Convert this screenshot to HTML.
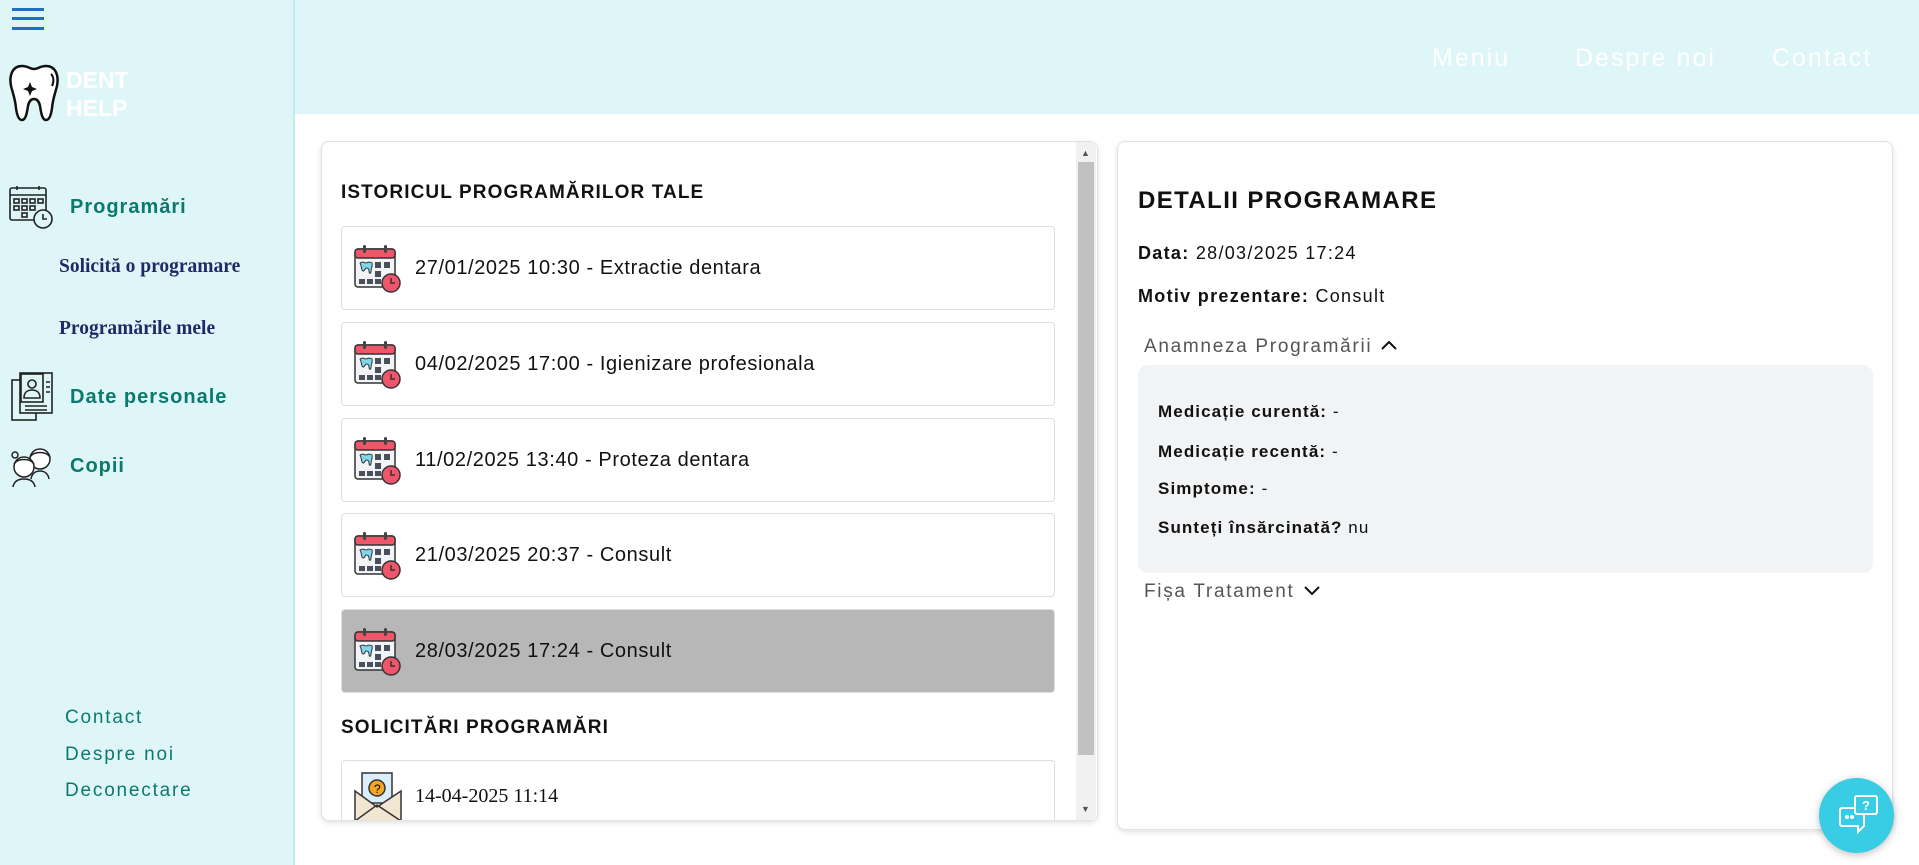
<!DOCTYPE html>
<html><head><meta charset="utf-8"><style>
*{box-sizing:border-box;margin:0;padding:0}
body{width:1919px;height:865px;overflow:hidden;background:#fff;font-family:"Liberation Sans",sans-serif;position:relative;color:#111}
.abs{position:absolute}
#side{left:0;top:0;width:295px;height:865px;background:#dff6f9;border-right:2px solid #bfecf2}
#top{left:295px;top:0;width:1624px;height:114px;background:#dff6f9}
.nav{color:#fff;font-size:25px;top:44px;letter-spacing:2px}
.teal{color:#0b7a6c}
.sb{font-weight:bold;font-size:20px;letter-spacing:1px}
.sub{font-family:"Liberation Serif",serif;font-weight:bold;color:#1c2a66;font-size:19.5px}
.lnk{font-size:19px;color:#0b7a6c;left:65px;letter-spacing:1.8px}
.card{background:#fff;border:1px solid #e2e2e2;border-radius:8px;box-shadow:0 2px 6px rgba(0,0,0,.12)}
.item{left:341px;width:714px;height:84px;border:1px solid #dedede;border-radius:4px;background:#fff}
.item span{position:absolute;left:73px;top:30px;font-size:20px;letter-spacing:0.6px}
.item svg{position:absolute;left:12px;top:18px}
h2{font-size:19px;font-weight:bold;position:absolute;letter-spacing:1.1px}
.row{font-size:18px;position:absolute;left:1138px;letter-spacing:1.3px}
.row b{font-weight:bold}
.g{font-size:17px;position:absolute;left:1158px;letter-spacing:1.1px}
</style></head><body>
<div id="side" class="abs"></div>
<div id="top" class="abs"></div>
<div class="abs" style="left:12px;top:8px;width:32px;height:3px;background:#1f6fc8"></div>
<div class="abs" style="left:12px;top:17px;width:32px;height:3px;background:#1f6fc8"></div>
<div class="abs" style="left:12px;top:27px;width:32px;height:3px;background:#1f6fc8"></div>
<svg class="abs" style="left:8px;top:64px" width="52" height="58" viewBox="0 0 52 58"><path d="M14 2C4 2 1 12 3 22c2 8 4 12 5 22 1 8 3 12 6 12 4 0 5-8 6-14 1-5 3-7 6-7s5 2 6 7c1 6 2 14 6 14 3 0 5-4 6-12 1-10 3-14 5-22 2-10-1-20-11-20-6 0-8 3-12 3S20 2 14 2z" fill="#fff" stroke="#111" stroke-width="2.5"/><path d="M22 18l2 5 5 2-5 2-2 5-2-5-5-2 5-2z" fill="#111"/><path d="M43 10c3 3 3 8 1 12" stroke="#111" stroke-width="2" fill="none"/></svg>
<div class="abs" style="left:66px;top:66px;color:#fff;font-weight:bold;font-size:23px;line-height:28px">DENT<br>HELP</div>
<svg class="abs" style="left:9px;top:185px" width="44" height="44" viewBox="0 0 44 44" fill="none" stroke="#222" stroke-width="1.6"><rect x="1" y="3" width="36" height="32" rx="2"/><line x1="1" y1="10" x2="37" y2="10"/><line x1="8" y1="1" x2="8" y2="5"/><line x1="30" y1="1" x2="30" y2="5"/><rect x="5" y="14" width="5" height="4"/><rect x="13" y="14" width="5" height="4"/><rect x="21" y="14" width="5" height="4"/><rect x="29" y="14" width="5" height="4"/><rect x="5" y="21" width="5" height="4"/><rect x="13" y="21" width="5" height="4"/><rect x="21" y="21" width="5" height="4"/><rect x="13" y="28" width="5" height="4"/><circle cx="34" cy="34" r="9" fill="#dff6f9"/><path d="M34 29v5h4"/></svg>
<div class="abs sb teal" style="left:70px;top:196px">Programări</div>
<div class="abs sub" style="left:59px;top:256px">Solicită o programare</div>
<div class="abs sub" style="left:59px;top:318px">Programările mele</div>
<svg class="abs" style="left:11px;top:372px" width="42" height="50" viewBox="0 0 42 50" fill="none" stroke="#222" stroke-width="1.6"><rect x="1" y="8" width="24" height="40"/><rect x="9" y="1" width="32" height="40" fill="#dff6f9"/><rect x="10" y="2" width="22" height="28"/><circle cx="21" cy="12" r="4"/><path d="M13 26c0-6 4-8 8-8s8 2 8 8z"/><path d="M35 10h4M35 15h4M35 20h4M14 34h22M14 38h22"/></svg>
<div class="abs sb teal" style="left:70px;top:386px">Date personale</div>
<svg class="abs" style="left:9px;top:445px" width="44" height="42" viewBox="0 0 44 42" fill="none" stroke="#222" stroke-width="1.5"><circle cx="31" cy="14" r="10" fill="#fff"/><path d="M21 12c4-6 16-6 20 0" /><path d="M22 34c1-6 5-8 9-8s8 2 9 8"/><circle cx="15" cy="22" r="10" fill="#fff"/><path d="M5 19c4-6 16-6 20 0"/><path d="M4 42c1-6 5-8 11-8s10 2 11 8"/><circle cx="6" cy="10" r="3"/></svg>
<div class="abs sb teal" style="left:70px;top:455px">Copii</div>
<div class="abs lnk" style="top:707px">Contact</div>
<div class="abs lnk" style="top:744px">Despre noi</div>
<div class="abs lnk" style="top:780px">Deconectare</div>

<div class="abs nav" style="left:1432px">Meniu</div>
<div class="abs nav" style="left:1575px">Despre noi</div>
<div class="abs nav" style="left:1772px">Contact</div>

<div class="abs card" style="left:321px;top:141px;width:777px;height:680px"></div>
<div class="abs" style="left:1076px;top:142px;width:20px;height:678px;background:#f1f1f1"></div>
<div class="abs" style="left:1078px;top:162px;width:16px;height:593px;background:#c1c1c1"></div>
<div class="abs" style="left:1081px;top:148px;font-size:9px;color:#555">▲</div>
<div class="abs" style="left:1081px;top:804px;font-size:9px;color:#555">▼</div>
<h2 style="left:341px;top:182px">ISTORICUL PROGRAMĂRILOR TALE</h2>

<svg width="0" height="0" style="position:absolute"><defs><g id="cal"><rect x="1" y="4" width="40" height="38" rx="3" fill="#f2f4f7" stroke="#333" stroke-width="1.5"/><rect x="1" y="4" width="40" height="9" rx="3" fill="#f0566a" stroke="#333" stroke-width="1.5"/><rect x="9" y="0" width="3" height="8" rx="1.5" fill="#444"/><rect x="30" y="0" width="3" height="8" rx="1.5" fill="#444"/><path d="M6 18c3-2 5 0 6 0s3-2 6 0c1 3-1 5-1 8 0 3-2 3-2 0s-2-3-3-3-1 3-3 3-1-5-3-8z" fill="#7fd6ee" stroke="#333" stroke-width="1"/><g fill="#4a4f5c"><rect x="21" y="17" width="6" height="6"/><rect x="30" y="17" width="6" height="6"/><rect x="21" y="26" width="6" height="6"/><rect x="5" y="34" width="6" height="5"/><rect x="13" y="34" width="6" height="5"/><rect x="21" y="34" width="6" height="5"/></g><circle cx="37" cy="38" r="9" fill="#f0566a" stroke="#333" stroke-width="1.5"/><path d="M37 33v5h4" stroke="#333" stroke-width="1.5" fill="none"/></g></defs></svg>

<div class="abs item" style="top:226px"><svg width="48" height="50"><use href="#cal"/></svg><span>27/01/2025 10:30 - Extractie dentara</span></div>
<div class="abs item" style="top:322px"><svg width="48" height="50"><use href="#cal"/></svg><span>04/02/2025 17:00 - Igienizare profesionala</span></div>
<div class="abs item" style="top:418px"><svg width="48" height="50"><use href="#cal"/></svg><span>11/02/2025 13:40 - Proteza dentara</span></div>
<div class="abs item" style="top:513px"><svg width="48" height="50"><use href="#cal"/></svg><span>21/03/2025 20:37 - Consult</span></div>
<div class="abs item" style="top:609px;background:#b7b7b7"><svg width="48" height="50"><use href="#cal"/></svg><span>28/03/2025 17:24 - Consult</span></div>
<h2 style="left:341px;top:717px">SOLICITĂRI PROGRAMĂRI</h2>
<div class="abs item" style="top:760px;height:60px;border-bottom:none;border-radius:4px 4px 0 0;overflow:hidden">
<svg style="position:absolute;left:12px;top:10px" width="50" height="50" viewBox="0 0 50 50"><rect x="8" y="2" width="30" height="30" fill="#dbeefc" stroke="#333" stroke-width="1.5"/><circle cx="23" cy="17" r="8" fill="#f5a623" stroke="#333" stroke-width="1.5"/><text x="20" y="22" font-size="12" font-family="Liberation Sans">?</text><path d="M1 20l22 16 24-16v30H1z" fill="#f1e6d0" stroke="#333" stroke-width="1.5"/><path d="M1 50l22-16 24 16" fill="none" stroke="#333" stroke-width="1.5"/></svg>
<span style="font-family:'Liberation Serif',serif;font-size:20px;top:24px;letter-spacing:0">14-04-2025 11:14</span></div>

<div class="abs card" style="left:1117px;top:141px;width:776px;height:689px"></div>
<div class="abs" style="left:1138px;top:187px;font-size:24px;font-weight:bold;letter-spacing:1.4px">DETALII PROGRAMARE</div>
<div class="row" style="top:243px"><b>Data:</b> 28/03/2025 17:24</div>
<div class="row" style="top:286px"><b>Motiv prezentare:</b> Consult</div>
<div class="row" style="top:336px;left:1144px;color:#555;font-size:19px;letter-spacing:1.7px">Anamneza Programării <svg width="20" height="14" viewBox="0 0 20 14"><path d="M3 11l7-7 7 7" stroke="#111" stroke-width="2" fill="none"/></svg></div>
<div class="abs" style="left:1138px;top:365px;width:735px;height:208px;background:#f2f3f5;border-radius:10px"></div>
<div class="g" style="top:402px"><b>Medicație curentă:</b> -</div>
<div class="g" style="top:442px"><b>Medicație recentă:</b> -</div>
<div class="g" style="top:479px"><b>Simptome:</b> -</div>
<div class="g" style="top:518px"><b>Sunteți însărcinată?</b> nu</div>
<div class="row" style="top:581px;left:1144px;color:#555;font-size:19px;letter-spacing:1.7px">Fișa Tratament <svg width="20" height="14" viewBox="0 0 20 14"><path d="M3 4l7 7 7-7" stroke="#111" stroke-width="2" fill="none"/></svg></div>

<div class="abs" style="left:1819px;top:778px;width:75px;height:75px;border-radius:50%;background:#38cde4;box-shadow:0 2px 8px rgba(0,0,0,.25)"></div>
<svg class="abs" style="left:1838px;top:794px" width="42" height="42" viewBox="0 0 42 42" fill="none" stroke="#fff" stroke-width="2"><rect x="17" y="2" width="22" height="18" rx="2"/><text x="24" y="16" fill="#fff" stroke="none" font-size="13" font-weight="bold" font-family="Liberation Sans">?</text><path d="M17 14H4a2 2 0 0 0-2 2v14a2 2 0 0 0 2 2h16v6l6-6v-12"/><circle cx="9" cy="23" r="1" fill="#fff"/><circle cx="14" cy="23" r="1" fill="#fff"/></svg>
</body></html>
